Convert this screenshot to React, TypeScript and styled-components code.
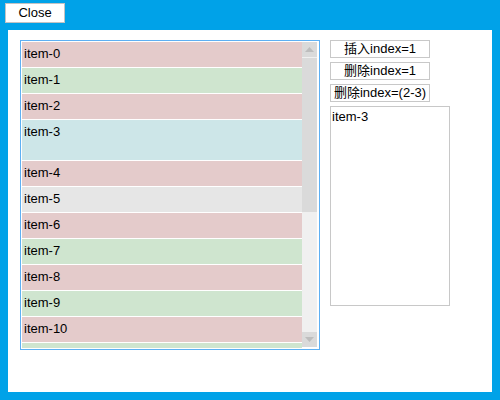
import styled, { createGlobalStyle } from 'styled-components';

const GlobalStyle = createGlobalStyle`
  html, body {
    margin: 0;
    padding: 0;
    background: #00a2e8;
    font-family: 'Liberation Sans', Arial, 'Noto Sans CJK SC', sans-serif;
    font-size: 13px;
    color: #000;
  }
`;

const Page = styled.div`
  width: 500px;
  height: 400px;
  display: flex;
  flex-direction: column;
  background: #00a2e8;
  box-sizing: border-box;
`;

const TopBar = styled.div`
  height: 30px;
  padding: 3px 0 0 5px;
  box-sizing: border-box;
  display: flex;
  align-items: flex-start;
`;

const CloseButton = styled.button`
  width: 60px;
  height: 20px;
  padding: 0;
  background: #fff;
  border: 1px solid #c3c3c3;
  font: 13px 'Liberation Sans', Arial, sans-serif;
  color: #000;
  line-height: 18px;
`;

const Panel = styled.div`
  flex: 1;
  margin: 0 8px 8px;
  padding: 10px 12px;
  background: #fff;
  display: flex;
  align-items: flex-start;
  gap: 10px;
`;

const ListBox = styled.div`
  width: 300px;
  height: 310px;
  box-sizing: border-box;
  border: 1px solid #5eb0f3;
  padding: 1px;
  display: flex;
`;

const Items = styled.div`
  width: 280px;
  height: 100%;
  overflow: hidden;
  display: flex;
  flex-direction: column;
`;

type Tone = 'pink' | 'green' | 'teal' | 'grey';

const toneColors: Record<Tone, string> = {
  pink: '#e4cbcb',
  green: '#cfe5cf',
  teal: '#cde6e8',
  grey: '#e6e6e6',
};

const Item = styled.div<{ $tone: Tone; $tall?: boolean }>`
  flex-shrink: 0;
  height: ${({ $tall }) => ($tall ? 40 : 25)}px;
  margin-bottom: 1px;
  padding-left: 2px;
  line-height: 23px;
  background: ${({ $tone }) => toneColors[$tone]};
`;

const Scrollbar = styled.div`
  width: 15px;
  height: 305px;
  margin-right: 1px;
  display: flex;
  flex-direction: column;
  background: #f0f0f0;
`;

const ScrollButton = styled.div`
  height: 15px;
  flex-shrink: 0;
  background: #dadada;
  display: flex;
  align-items: center;
  justify-content: center;
`;

const Thumb = styled.div`
  height: 154px;
  flex-shrink: 0;
  border-top: 1px solid #f0f0f0;
  background: #dadada;
`;

const Track = styled.div`
  flex: 1;
`;

const Side = styled.div`
  display: flex;
  flex-direction: column;
  align-items: flex-start;
  gap: 4px;
`;

const ActionButton = styled.button`
  width: 100px;
  height: 18px;
  padding: 0;
  background: #fff;
  border: 1px solid #c8c8c8;
  font: 13px 'Liberation Sans', Arial, 'Noto Sans CJK SC', sans-serif;
  line-height: 16px;
  color: #000;
  white-space: nowrap;
`;

const Output = styled.div`
  width: 120px;
  height: 200px;
  box-sizing: border-box;
  border: 1px solid #c8c8c8;
  padding: 2px 1px;
  line-height: 15px;
`;

const Arrow = ({ down }: { down?: boolean }) => (
  <svg width="9" height="5" viewBox="0 0 9 5">
    <polygon points={down ? '0,0 9,0 4.5,5' : '0,5 9,5 4.5,0'} fill="#bdbdbd" />
  </svg>
);

const items: { label: string; tone: Tone; tall?: boolean }[] = [
  { label: 'item-0', tone: 'pink' },
  { label: 'item-1', tone: 'green' },
  { label: 'item-2', tone: 'pink' },
  { label: 'item-3', tone: 'teal', tall: true },
  { label: 'item-4', tone: 'pink' },
  { label: 'item-5', tone: 'grey' },
  { label: 'item-6', tone: 'pink' },
  { label: 'item-7', tone: 'green' },
  { label: 'item-8', tone: 'pink' },
  { label: 'item-9', tone: 'green' },
  { label: 'item-10', tone: 'pink' },
  { label: 'item-11', tone: 'green' },
];

export default function App() {
  return (
    <Page>
      <GlobalStyle />
      <TopBar>
        <CloseButton>Close</CloseButton>
      </TopBar>
      <Panel>
        <ListBox>
          <Items>
            {items.map(item => (
              <Item key={item.label} $tone={item.tone} $tall={item.tall}>
                {item.label}
              </Item>
            ))}
          </Items>
          <Scrollbar>
            <ScrollButton>
              <Arrow />
            </ScrollButton>
            <Thumb />
            <Track />
            <ScrollButton>
              <Arrow down />
            </ScrollButton>
          </Scrollbar>
        </ListBox>
        <Side>
          <ActionButton>插入index=1</ActionButton>
          <ActionButton>删除index=1</ActionButton>
          <ActionButton>删除index=(2-3)</ActionButton>
          <Output>item-3</Output>
        </Side>
      </Panel>
    </Page>
  );
}
